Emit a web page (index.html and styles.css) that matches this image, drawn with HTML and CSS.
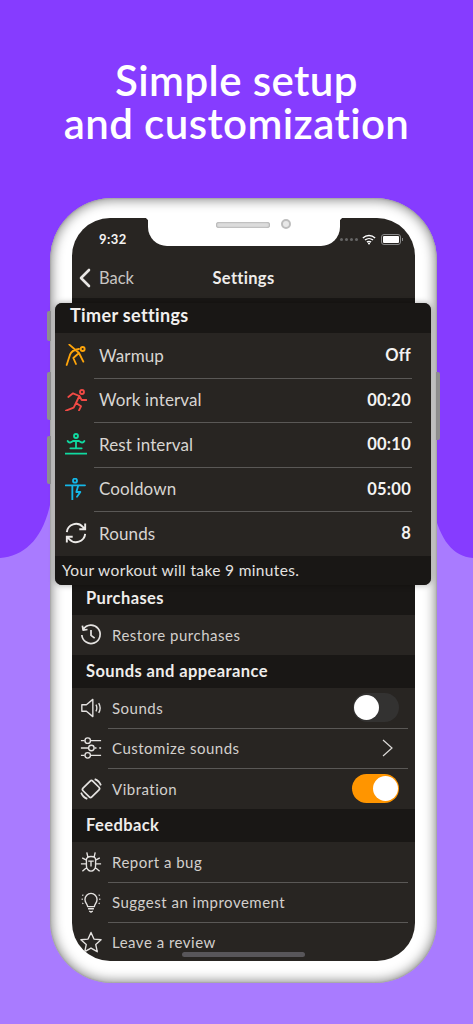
FILE: index.html
```html
<!DOCTYPE html>
<html lang="en">
<head>
<meta charset="utf-8">
<title>Settings</title>
<link rel="stylesheet" href="styles.css">
</head>
<body>
<div class="page">
  <svg class="bg-wave" viewBox="0 0 473 1024" preserveAspectRatio="none" aria-hidden="true">
    <path d="M0 0H473V558C452 556 440 540 432 505H50C42 540 24 556 0 558Z"/>
  </svg>
  <h1 class="title"><span class="title-line">Simple setup</span><span class="title-line">and customization</span></h1>
  <div class="phone">
    <span class="side-btn side-l1"></span>
    <span class="side-btn side-l2"></span>
    <span class="side-btn side-l3"></span>
    <span class="side-btn side-r1"></span>
    <div class="screen">
      <div class="notch"><span class="speaker"></span><span class="camera"></span></div>
      <div class="status">
        <span class="time">9:32</span>
        <span class="status-right">
          <span class="dots"><i></i><i></i><i></i><i></i></span>
          <svg class="wifi" viewBox="0 0 16 12"><path d="M1 4.200C5 .6 11 .6 15 4.200M3.400 6.600C6 4.400 10 4.400 12.600 6.600M5.600 9C7 8 9 8 10.400 9" fill="none" stroke="#fff" stroke-width="1.600"/><circle cx="8" cy="10.600" r="1.200" fill="#fff"/></svg>
          <span class="battery"><span></span></span>
        </span>
      </div>
      <div class="nav">
        <span class="back">
          <svg class="back-chev" viewBox="0 0 12 20"><path d="M10 2 2 10l8 8" fill="none" stroke="#e8e6e4" stroke-width="2.600" stroke-linecap="round" stroke-linejoin="round"/></svg>
          Back
        </span>
        <span class="nav-title">Settings</span>
      </div>
      <div class="hidden-gap"></div>
      <div class="sec-head">Purchases</div>
      <div class="row row-last">
        <svg class="ico ico-bold" viewBox="0 0 24 24"><path d="M3.600 5.800A10 10 0 1 1 2 12M2.600 1.800 3.400 6.600 8.200 6M12 6.600V12.400L16 15.400"/></svg>
        <span class="row-label">Restore purchases</span>
      </div>
      <div class="sec-head">Sounds and appearance</div>
      <div class="row">
        <svg class="ico" viewBox="0 0 24 24"><path d="M2 8.400H7L14 2.600V21.400L7 15.600H2ZM17.400 8.400C18.600 10.600 18.600 13.400 17.400 15.600M20.400 6.600C22.400 10 22.400 14 20.400 17.400"/></svg>
        <span class="row-label">Sounds</span>
        <span class="toggle toggle-off"><span class="knob"></span></span>
      </div>
      <div class="row">
        <svg class="ico" viewBox="0 0 24 24"><path d="M1 4H5M12 4H23M1 12H9M16 12H18M21 12H23M1 20H5M12 20H23"/><circle cx="8.400" cy="4" r="3"/><circle cx="12.400" cy="12" r="3"/><circle cx="8.400" cy="20" r="3"/></svg>
        <span class="row-label">Customize sounds</span>
        <svg class="chev" viewBox="0 0 11 18"><path d="M1 1l9 8-9 8" fill="none" stroke="#dcdad8" stroke-width="1.200"/></svg>
      </div>
      <div class="row row-last">
        <svg class="ico ico-bold" viewBox="0 0 24 24"><rect x="5.200" y="4.500" width="13.600" height="15" rx="2" transform="rotate(45 12 12)"/><path d="M16 1.200A11.500 11.500 0 0 1 22.800 8M8 22.800A11.500 11.500 0 0 1 1.200 16"/></svg>
        <span class="row-label">Vibration</span>
        <span class="toggle toggle-on"><span class="knob"></span></span>
      </div>
      <div class="sec-head sec-feedback">Feedback</div>
      <div class="row">
        <svg class="ico" viewBox="0 0 24 24"><path d="M7 9.400C7 7.400 9 6 12 6S17 7.400 17 9.400V16A5 6 0 0 1 7 16ZM8.600 6.600 7.400 1.400M15.400 6.600 16.600 1.400M9 11H15M12 11V17M7 10 2.400 7.400M17 10 21.600 7.400M7 14H1M17 14H23M7.400 18 2.600 22M16.600 18 21.400 22"/></svg>
        <span class="row-label">Report a bug</span>
      </div>
      <div class="row">
        <svg class="ico" viewBox="0 0 24 24"><path d="M8.400 17C8 14 5.400 13 5.400 9.200A6.600 6.600 0 0 1 18.600 9.200C18.600 13 16 14 15.600 17ZM8.800 19.400H15.200M10 21.800 12 23 14 21.800M1.800 9H3M21 9H22.200M2.600 4.200 3.600 5M21.400 4.200 20.400 5M2.600 14 3.600 13.200M21.400 14 20.400 13.200"/></svg>
        <span class="row-label">Suggest an improvement</span>
      </div>
      <div class="row row-last">
        <svg class="ico" viewBox="0 0 24 24"><path d="M12 1.600 15.200 8.800 23 9.600 17.200 14.800 18.800 22.600 12 18.600 5.200 22.600 6.800 14.800 1 9.600 8.800 8.800Z"/></svg>
        <span class="row-label">Leave a review</span>
      </div>
      <span class="home-bar"></span>
    </div>
    <section class="panel">
      <div class="panel-head">Timer settings</div>
      <div class="p-row">
        <svg class="p-ico ico-warm" viewBox="0 0 66 66"><circle cx="53" cy="15" r="6"/><path d="M5 63 15 32Q20 18 42 15M13 2 42 27 25 42 33 60M42 27 55 53"/></svg>
        <span class="p-label">Warmup</span><span class="p-value">Off</span>
      </div>
      <div class="p-row">
        <svg class="p-ico ico-work" viewBox="0 0 66 66"><circle cx="51" cy="9" r="6"/><path d="M10 24 24 13 43 21 33 42 48 52 42 64M43 21 50 33 64 33M33 42 26 56 3 65"/></svg>
        <span class="p-label">Work interval</span><span class="p-value">00:20</span>
      </div>
      <div class="p-row">
        <svg class="p-ico ico-rest" viewBox="0 0 66 66"><circle cx="33" cy="9" r="6"/><path d="M8 24C12 32 18 28 24 24H42C48 28 54 32 58 24M33 24V46M16 46H50M1 62H65"/></svg>
        <span class="p-label">Rest interval</span><span class="p-value">00:10</span>
      </div>
      <div class="p-row">
        <svg class="p-ico ico-cool" viewBox="0 0 66 66"><circle cx="30" cy="8" r="6"/><path d="M2 22H60M22 22V65M40 22 34 42H46L36 56"/></svg>
        <span class="p-label">Cooldown</span><span class="p-value">05:00</span>
      </div>
      <div class="p-row p-row-last">
        <svg class="p-ico ico-round" viewBox="0 0 24 24"><path d="M2 11A10 10 0 0 1 19.400 5.400L21.800 8M22 13A10 10 0 0 1 4.600 18.600L2.200 16M22 1.600V8H15.600M2 22.400V16H8.400"/></svg>
        <span class="p-label">Rounds</span><span class="p-value">8</span>
      </div>
      <div class="panel-foot">Your workout will take 9 minutes.</div>
    </section>
  </div>
</div>
</body>
</html>
```
FILE: styles.css
```css
* { box-sizing: border-box; }
html, body { margin: 0; padding: 0; }
body { font-family: "Lato", "Noto Sans", sans-serif; }

.page {
  position: relative;
  width: 473px;
  height: 1024px;
  overflow: hidden;
  background: #a97bff;
  padding-top: 59px;
}
.bg-wave { position: absolute; inset: 0; width: 473px; height: 1024px; }
.bg-wave path { fill: #863cff; }

.title {
  position: relative;
  margin: 0;
  color: #fff;
  text-align: center;
  font-size: 42px;
  font-weight: 600;
  letter-spacing: .42px;
}
.title-line { display: block; height: 43px; line-height: 43px; }

.phone {
  position: relative;
  width: 387px;
  height: 785px;
  margin: 53px 0 0 50px;
  padding: 20px 22px 22px;
  border-radius: 62px;
  background: #fff;
  box-shadow: inset 0 0 12px 2px #8a8a8a, inset 0 0 2px #777;
}
.side-btn { position: absolute; width: 4px; background: #8f8f8f; }
.side-l1 { left: -3px; top: 113px; height: 30px; border-radius: 2px 0 0 2px; }
.side-l2 { left: -3px; top: 174px; height: 48px; border-radius: 2px 0 0 2px; }
.side-l3 { left: -3px; top: 238px; height: 48px; border-radius: 2px 0 0 2px; }
.side-r1 { right: -3px; top: 174px; height: 68px; border-radius: 0 2px 2px 0; }

.screen {
  position: relative;
  height: 743px;
  overflow: hidden;
  border-radius: 38px;
  background: #282522;
  color: #d8d5d2;
  display: flex;
  flex-direction: column;
}

.notch {
  position: absolute;
  left: 76px;
  top: 0;
  width: 192px;
  height: 28px;
  background: #fff;
  border-radius: 0 0 19px 19px;
}
.notch::before, .notch::after {
  content: "";
  position: absolute;
  top: 0;
  width: 4px;
  height: 4px;
}
.notch::before { left: -4px; background: radial-gradient(circle at 0 100%, transparent 4px, #fff 4.500px); }
.notch::after { right: -4px; background: radial-gradient(circle at 100% 100%, transparent 4px, #fff 4.500px); }
.speaker {
  position: absolute;
  left: 68px;
  top: 4px;
  width: 54px;
  height: 6px;
  border-radius: 3px;
  background: #dcdcdc;
  box-shadow: inset 0 0 2px #777;
}
.camera {
  position: absolute;
  left: 133px;
  top: 1px;
  width: 10px;
  height: 10px;
  border-radius: 50%;
  background: #e8e8e8;
  border: 2px solid #bdbdbd;
}

.status {
  flex: none;
  height: 40px;
  padding: 12px 14px 0 27px;
  display: flex;
  justify-content: space-between;
  align-items: flex-start;
}
.time { color: #f4f3f2; font-size: 13px; font-weight: 700; line-height: 18px; letter-spacing: .4px; }
.status-right { display: flex; align-items: center; gap: 3px; height: 18px; }
.dots { display: flex; gap: 2px; margin-right: 1px; }
.dots i { width: 3px; height: 3px; border-radius: 50%; background: #666; }
.wifi { width: 14px; height: 11px; }
.battery {
  position: relative;
  width: 20px;
  height: 11px;
  border: 1px solid #8a8a8a;
  border-radius: 3px;
  padding: 1px;
  margin-left: 2px;
  display: flex;
}
.battery span { flex: 1; background: #fff; border-radius: 1px; }
.battery::after {
  content: "";
  position: absolute;
  right: -3px;
  top: 3px;
  width: 1px;
  height: 3px;
  background: #8a8a8a;
}

.nav {
  position: relative;
  flex: none;
  height: 40px;
  display: flex;
  align-items: center;
  justify-content: center;
}
.back {
  position: absolute;
  left: 7px;
  top: 10px;
  display: flex;
  align-items: center;
  gap: 8px;
  color: #c9c6c3;
  font-size: 16.500px;
  line-height: 20px;
}
.back-chev { width: 12px; height: 20px; }
.nav-title { color: #efedeb; font-size: 16.500px; font-weight: 700; letter-spacing: .3px; }

.hidden-gap { flex: none; height: 283.500px; background: #191715; }

.sec-head {
  flex: none;
  height: 33px;
  padding-left: 14px;
  display: flex;
  align-items: center;
  background: #191715;
  color: #efedeb;
  font-size: 16.500px;
  font-weight: 700;
  letter-spacing: .4px;
}

.row {
  position: relative;
  flex: none;
  height: 40.300px;
  padding: 0 16px 0 8px;
  display: flex;
  align-items: center;
  gap: 10px;
}
.row::after {
  content: "";
  position: absolute;
  left: 36px;
  right: 7px;
  bottom: -1px;
  height: 1px;
  background: #5a5856;
}
.row-last::after { display: none; }
.row-label { flex: 1; font-size: 15px; letter-spacing: .5px; color: #d3d0cd; }

.ico {
  flex: none;
  width: 22px;
  height: 22px;
  fill: none;
  stroke: #e4e2e0;
  stroke-width: 1.500;
  stroke-linejoin: round;
}
.ico-bold { stroke-width: 1.900; }

.toggle {
  position: relative;
  flex: none;
  width: 46px;
  height: 29px;
  border-radius: 15px;
  background: #333231;
}
.toggle .knob {
  position: absolute;
  top: 2px;
  width: 25px;
  height: 25px;
  border-radius: 50%;
  background: #fff;
}
.toggle-off .knob { left: 1px; }
.toggle-on { background: #ff9500; width: 47px; }
.toggle-on .knob { right: 1px; }
.chev { flex: none; width: 11px; height: 18px; margin-right: 6px; }

.home-bar {
  position: absolute;
  left: 110px;
  bottom: 4px;
  width: 123px;
  height: 5px;
  border-radius: 3px;
  background: #58565a;
}

.panel {
  position: absolute;
  left: 5px;
  top: 105px;
  width: 376px;
  height: 282px;
  border-radius: 7px;
  overflow: hidden;
  background: #282522;
  color: #d8d5d2;
  box-shadow: 0 0 6px rgba(0, 0, 0, .35);
  display: flex;
  flex-direction: column;
}
.panel-head {
  flex: none;
  height: 30px;
  padding: 0 0 6px 15px;
  display: flex;
  align-items: center;
  background: #191715;
  color: #f2f0ee;
  font-size: 18px;
  font-weight: 700;
  letter-spacing: .35px;
}
.p-row {
  position: relative;
  flex: none;
  height: 44.500px;
  padding: 0 20px 0 10px;
  display: flex;
  align-items: center;
  gap: 12px;
}
.p-row::after {
  content: "";
  position: absolute;
  left: 39px;
  right: 19px;
  bottom: -1px;
  height: 1px;
  background: #5a5856;
}
.p-row-last::after { display: none; }
.p-ico {
  flex: none;
  width: 22px;
  height: 22px;
  fill: none;
  stroke-width: 5.500;
  stroke-linejoin: round;
  stroke-linecap: round;
}
.ico-warm { stroke: #ffa50a; }
.ico-work { stroke: #f24a45; }
.ico-rest { stroke: #10d9a0; }
.ico-cool { stroke: #14b8e8; }
.ico-round { stroke: #eceae8; stroke-width: 2.100; stroke-linecap: butt; stroke-linejoin: miter; }
.p-label { flex: 1; font-size: 17px; letter-spacing: .12px; color: #d8d5d2; }
.p-value { color: #f4f3f2; font-size: 16.500px; font-weight: 700; letter-spacing: .25px; }
.panel-foot {
  flex: 1;
  padding-left: 7px;
  display: flex;
  align-items: center;
  background: #191715;
  color: #e4e2e0;
  font-size: 15.500px;
  letter-spacing: .35px;
}
```
